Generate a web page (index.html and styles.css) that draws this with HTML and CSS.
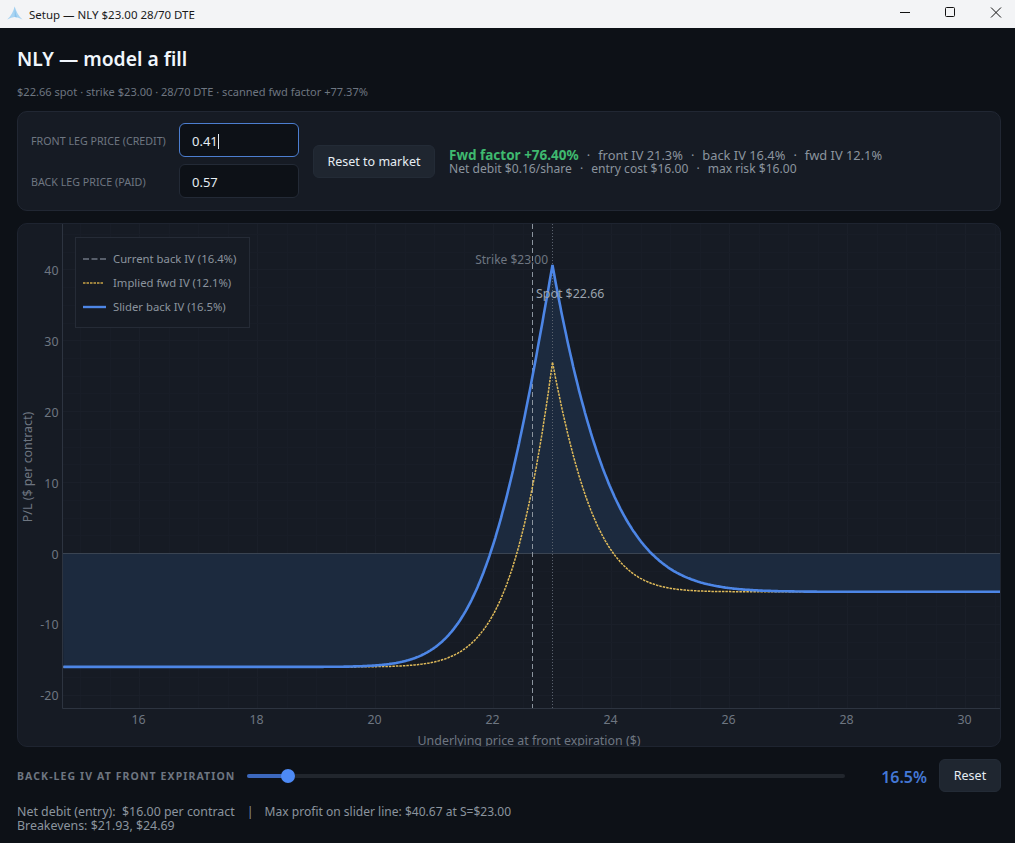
FILE: index.html
```html
<!DOCTYPE html>
<html lang="en">
<head>
    <meta charset="UTF-8">
    <meta name="viewport" content="width=device-width, initial-scale=1.0">
    <title>Setup — NLY $23.00 28/70 DTE</title>
    <link rel="stylesheet" href="styles.css">
</head>
<body>
    <header class="titlebar">
        <svg class="app-icon" viewBox="0 0 16 16" width="16" height="16">
            <path d="M7.7 1.5 C9 6 11.5 11 15.5 14.5 Q11 12 7.7 12 Q4.5 12 .2 14.5 C4 11 6.5 6 7.7 1.5 Z" fill="#a8d4f2"/>
            <path d="M7.7 1.5 C8.2 6 9 10 10 12.3 Q8.8 12 7.7 12 Z" fill="#8cc3ec"/>
        </svg>
        <span class="window-title">Setup — NLY $23.00 28/70 DTE</span>
        <div class="window-btns">
            <svg viewBox="0 0 46 28" width="46" height="28"><path d="M23 12.5h10" stroke="#111" fill="none"/></svg>
            <svg viewBox="0 0 46 28" width="46" height="28"><rect x="22.5" y="7.5" width="9" height="9" rx="1" stroke="#111" fill="none"/></svg>
            <svg viewBox="0 0 46 28" width="46" height="28"><path d="M22 7.5l10 10M32 7.5l-10 10" stroke="#111" fill="none"/></svg>
        </div>
    </header>

    <main class="page">
        <h1 class="title">NLY — model a fill</h1>
        <p class="subtitle">$22.66 spot · strike $23.00 · 28/70 DTE · scanned fwd factor +77.37%</p>

        <section class="fill-card">
            <div class="legs">
                <label class="leg-label" for="front">FRONT LEG PRICE (CREDIT)</label>
                <div class="leg-input focused" id="front">0.41<span class="caret"></span></div>
                <label class="leg-label" for="back">BACK LEG PRICE (PAID)</label>
                <div class="leg-input" id="back">0.57</div>
            </div>
            <button type="button" class="btn reset-market">Reset to market</button>
            <div class="stats">
                <div class="stats-main"><b class="good">Fwd factor +76.40%</b><i>·</i>front IV 21.3%<i>·</i>back IV 16.4%<i>·</i>fwd IV 12.1%</div>
                <div class="stats-sub">Net debit $0.16/share<i>·</i>entry cost $16.00<i>·</i>max risk $16.00</div>
            </div>
        </section>

        <section class="chart-card">
            <svg id="chart" class="chart" viewBox="0 0 984 524" width="984" height="524"></svg>
        </section>

        <section class="slider-row">
            <span class="slider-label">BACK-LEG IV AT FRONT EXPIRATION</span>
            <div class="slider"><div class="slider-fill"></div><div class="slider-thumb"></div></div>
            <span class="slider-value">16.5%</span>
            <button type="button" class="btn reset">Reset</button>
        </section>

        <p class="summary">Net debit (entry):&nbsp; $16.00 per contract<span class="pipe">|</span><span class="max-profit">Max profit on slider line: $40.67 at S=$23.00</span><br>Breakevens: $21.93, $24.69</p>
    </main>

    <script src="chart.js"></script>
</body>
</html>
```

FILE: styles.css
```css
*{
    margin: 0px;
    padding: 0px;
    box-sizing: border-box;
}

body{
    width: 1015px;
    height: 843px;
    overflow: hidden;
    background: #0d1117;
    font-family: "Noto Sans", "Liberation Sans", sans-serif;
    color: #e6edf3;
}

.titlebar{
    height: 28px;
    background: #f3f4f6;
    display: flex;
    align-items: center;
    padding-left: 7px;
    color: #1a1a1a;
    font-size: 11.5px;
}

.app-icon{
    margin-right: 6px;
    margin-bottom: 3px;
}

.window-title{
    flex: 1;
}

.window-btns{
    display: flex;
}

.window-btns svg{
    display: block;
}

.page{
    padding: 17px 14px 0px 17px;
}

.title{
    font-size: 19.3px;
    font-weight: 600;
    line-height: 28px;
    color: #f0f6fc;
}

.subtitle{
    margin-top: 11px;
    font-size: 11.07px;
    line-height: 16px;
    color: #6e7681;
}

.fill-card{
    margin-top: 11px;
    height: 100px;
    background: #161b24;
    border: 1px solid #212733;
    border-radius: 10px;
    display: flex;
    align-items: center;
    padding: 0px 13px;
}

.legs{
    display: grid;
    grid-template-columns: 148px 120px;
    row-gap: 7px;
    align-items: center;
    margin-bottom: 1px;
}

.leg-label{
    padding-top: 2px;
    font-size: 10.7px;
    color: #6e7681;
}

.leg-input{
    height: 34px;
    background: #0d1117;
    border: 1px solid #232a36;
    border-radius: 6px;
    font-size: 13px;
    line-height: 34px;
    padding-left: 12px;
    color: #e6edf3;
}

.leg-input.focused{
    border-color: #4c7ed0;
}

.caret{
    display: inline-block;
    width: 1px;
    height: 15px;
    background: #e6edf3;
    vertical-align: -3px;
}

.btn{
    background: #1f2630;
    border: 1px solid #232b36;
    border-radius: 6px;
    color: #e6edf3;
    font-family: inherit;
    font-size: 12.5px;
    cursor: pointer;
}

.reset-market{
    width: 122px;
    height: 33px;
    margin-left: 14px;
    margin-right: 14px;
}

.stats{
    line-height: 14px;
    color: #8b949e;
    margin-top: 2px;
}

.stats-main{
    font-size: 12.85px;
}

.stats-sub{
    font-size: 12.1px;
}

.stats i{
    font-style: normal;
    margin: 0px 8px;
}

.good{
    color: #3fb96f;
    font-size: 13.5px;
    font-weight: 700;
}

.chart-card{
    margin-top: 12px;
    height: 524px;
    background: #161b24;
    border: 1px solid #1e2430;
    border-radius: 10px;
    overflow: hidden;
}

.chart{
    display: block;
    margin: -1px;
}

.chart text{
    font-family: "Noto Sans", "Liberation Sans", sans-serif;
    font-size: 12.4px;
    fill: #6e7681;
}

.chart .strike-text{
    font-size: 12px;
}

.chart .legend-text{
    font-size: 11.3px;
    fill: #8b949e;
}

.chart .spot-text{
    fill: #9aa3ad;
}

.slider-row{
    margin-top: 12px;
    height: 33px;
    display: flex;
    align-items: center;
}

.slider-label{
    font-size: 10.5px;
    font-weight: 700;
    letter-spacing: 1.1px;
    color: #6e7681;
    width: 230px;
}

.slider{
    position: relative;
    width: 598px;
    height: 4px;
    background: #21262d;
    border-radius: 2px;
}

.slider-fill{
    width: 41px;
    height: 4px;
    background: #3c68bd;
    border-radius: 2px;
}

.slider-thumb{
    position: absolute;
    left: 34px;
    top: -5px;
    width: 14px;
    height: 14px;
    border-radius: 50%;
    background: #4d8af5;
}

.slider-value{
    margin-left: auto;
    padding-top: 2px;
    font-size: 16px;
    font-weight: 600;
    color: #4478d6;
}

.reset{
    width: 62px;
    height: 33px;
    margin-left: 12px;
}

.summary{
    margin-top: 13px;
    font-size: 12.4px;
    line-height: 14px;
    color: #8b949e;
}

.pipe{
    margin: 0px 11px 0px 12px;
}

.max-profit{
    font-size: 12.05px;
}
```

FILE: chart.js
```js
// card origin in window coordinates
const ox = 17, oy = 223;
const xs = s => 122.5 + (s - 16) * 59;
const ys = v => 553.5 - v * 7.09 - oy;
const snap = n => Math.floor(n) + 0.5;

const plot = { left: 45.5, right: 984, top: 1, bottom: 485.5 };
const svg = document.getElementById('chart');
let out = '';

// grid
for (let s = 15; s <= 30.5; s += 0.5) {
    const x = snap(xs(s));
    out += `<line x1="${x}" x2="${x}" y1="${plot.top}" y2="${plot.bottom}" stroke="${s % 2 === 0 ? '#1a1f29' : '#181d27'}"/>`;
}
for (let v = -20; v <= 45; v += 2.5) {
    const y = snap(ys(v));
    out += `<line x1="${plot.left}" x2="${plot.right}" y1="${y}" y2="${y}" stroke="${v % 10 === 0 ? '#1a1f29' : '#181d27'}"/>`;
}

// P/L curves: tails plus a decay away from the strike on each side
function curve(peak, left, right, lk, rk) {
    return s => {
        const d = Math.abs(s - 23);
        if (s < 23) return left + (peak - left) * Math.exp(-(lk[0] * d + lk[1] * d * d));
        return right + (peak - right) * Math.exp(-(rk[0] * d + rk[1] * d * d));
    };
}
const slider = curve(40.67, -16, -5.4, [0.84, 0.34], [1.0, 0.165]);
const fwd = curve(27, -16, -5.4, [1.45, 0.3], [1.35, 0.37]);

function points(fn) {
    const pts = [];
    for (let s = 14.71; s < 30.6; s += 0.02) {
        pts.push([s, fn(s)]);
    }
    pts.push([23, fn(23)]);
    pts.sort((a, b) => a[0] - b[0]);
    return pts.map(p => `${xs(p[0]).toFixed(1)} ${ys(p[1]).toFixed(1)}`);
}

const blue = points(slider);
const gold = points(fwd);
out += `<path d="M${plot.left} ${ys(0)} L${blue.join(' L')} L${plot.right} ${ys(0)} Z" fill="#1c2a3e"/>`;

// zero line, spot and strike lines
const spotX = snap(xs(22.66));
const strikeX = snap(xs(23));
out += `<line x1="${plot.left}" x2="${plot.right}" y1="${ys(0)}" y2="${ys(0)}" stroke="#3a4452"/>`;
out += `<line x1="${spotX}" x2="${spotX}" y1="${plot.top}" y2="${plot.bottom}" stroke="#8b949e" stroke-dasharray="5 3"/>`;
out += `<line x1="${strikeX}" x2="${strikeX}" y1="${plot.top}" y2="${plot.bottom}" stroke="#5a626d" stroke-dasharray="1 2"/>`;

out += `<path d="M${gold.join(' L')}" fill="none" stroke="#e0bb5a" stroke-width="1.5" stroke-dasharray="2.5 1"/>`;
out += `<path d="M${blue.join(' L')}" fill="none" stroke="#4d86e6" stroke-width="2.6"/>`;

// axes
out += `<path d="M${plot.left} ${plot.top} V${plot.bottom} H${plot.right}" fill="none" stroke="#2d3440"/>`;

for (let v = -20; v <= 40; v += 10) {
    out += `<text x="${plot.left - 4}" y="${ys(v) + 5}" text-anchor="end">${v}</text>`;
}
for (let s = 16; s <= 30; s += 2) {
    out += `<text x="${xs(s) - 1}" y="${plot.bottom + 15}" text-anchor="middle">${s}</text>`;
}
out += `<text x="512" y="522" text-anchor="middle">Underlying price at front expiration ($)</text>`;
out += `<text transform="translate(15 244) rotate(-90)" text-anchor="middle">P/L ($ per contract)</text>`;
out += `<text class="strike-text" x="531" y="41" text-anchor="end">Strike $23.00</text>`;
out += `<text class="spot-text" x="519" y="75">Spot $22.66</text>`;

// legend
out += `<rect x="58.5" y="14.5" width="174" height="90" fill="#161b24" stroke="#252b36"/>`;
out += `<line x1="66" x2="89" y1="36" y2="36" stroke="#6e7681" stroke-width="1.6" stroke-dasharray="6 2.5"/>`;
out += `<line x1="66" x2="87" y1="60" y2="60" stroke="#c9a445" stroke-width="1.3" stroke-dasharray="2.5 1"/>`;
out += `<line x1="66" x2="89" y1="84" y2="84" stroke="#4d86e6" stroke-width="2.4"/>`;
out += `<text class="legend-text" x="96" y="40">Current back IV (16.4%)</text>`;
out += `<text class="legend-text" x="96" y="64">Implied fwd IV (12.1%)</text>`;
out += `<text class="legend-text" x="96" y="88">Slider back IV (16.5%)</text>`;

svg.innerHTML = out;
```
